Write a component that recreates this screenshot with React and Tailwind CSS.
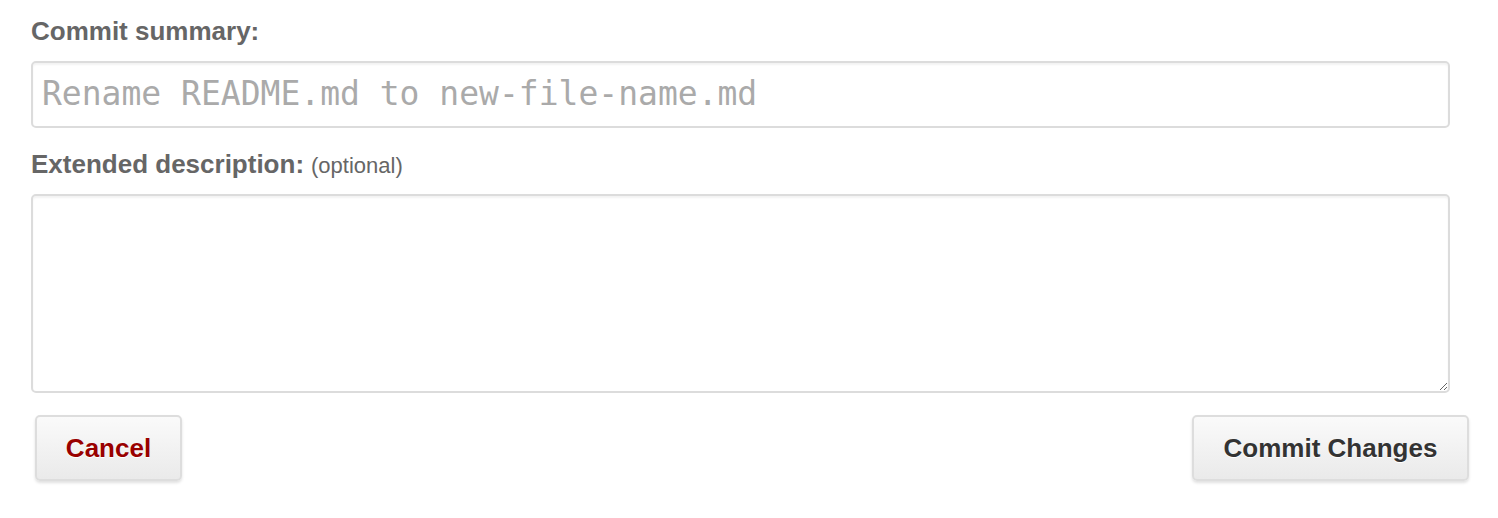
import React, { useState } from "react";

function App() {
  const [summary, setSummary] = useState("");
  const [description, setDescription] = useState("");

  return (
    <div className="w-[1498px] h-[518px] bg-white font-['Liberation_Sans',Arial,sans-serif] overflow-hidden">
      <div className="pt-[16px] pl-[31px]">
        {/* Summary */}
        <label className="block text-[26px] leading-[30px] font-bold text-[#666]">Commit summary:</label>
        <input
          type="text"
          value={summary}
          onChange={(e) => setSummary(e.target.value)}
          placeholder="Rename README.md to new-file-name.md"
          className="mt-[15px] block w-[1419px] h-[67px] px-[9px] pb-[2px] rounded-[5px] border-2 border-[#dcdcdc] shadow-[inset_0_2px_2px_rgba(0,0,0,0.05)] outline-none font-['DejaVu_Sans_Mono',monospace] text-[33px] text-[#333] placeholder:text-[#aaa]"
        />

        {/* Description */}
        <div className="mt-[21px] h-[30px] flex items-baseline gap-[7px]">
          <label className="text-[26px] leading-[30px] font-bold text-[#666]">Extended description:</label>
          <span className="text-[22px] leading-[30px] text-[#666]">(optional)</span>
        </div>
        <textarea
          value={description}
          onChange={(e) => setDescription(e.target.value)}
          className="mt-[15px] block w-[1419px] h-[199px] p-[9px] rounded-[5px] border-2 border-[#dcdcdc] shadow-[inset_0_2px_2px_rgba(0,0,0,0.05)] outline-none resize text-[26px] text-[#333]"
        />

        {/* Actions */}
        <div className="mt-[22px] ml-[4px] w-[1434px] flex justify-between">
          <button className="w-[147px] h-[66px] rounded-[5px] border-2 border-[#ddd] bg-gradient-to-b from-[#fafafa] to-[#eaeaea] shadow-[0_2px_3px_rgba(0,0,0,0.12)] text-[26px] font-bold text-[#990000] [text-shadow:0_1px_0_#fff]">
            Cancel
          </button>
          <button className="w-[277px] h-[66px] rounded-[5px] border-2 border-[#ddd] bg-gradient-to-b from-[#fafafa] to-[#eaeaea] shadow-[0_2px_3px_rgba(0,0,0,0.12)] text-[26px] font-bold text-[#333] [text-shadow:0_1px_0_#fff]">
            Commit Changes
          </button>
        </div>
      </div>
    </div>
  );
}

export default App;
